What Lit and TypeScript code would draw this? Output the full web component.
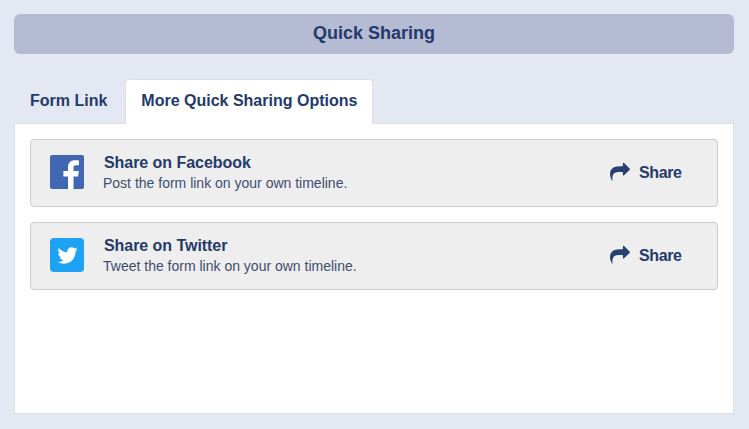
import { LitElement, html, css, svg } from 'lit'
import { customElement } from 'lit/decorators.js'

const shareIcon = svg`<path d="M1792 640q0 26-19 45l-512 512q-19 19-45 19t-45-19-19-45v-256h-224q-98 0-175.500 6t-154 21.500-133 42.500-105.500 69.500-80 101-48.500 138.500-17.500 181q0 55 5 123 0 6 2.500 23.500t2.500 26.500q0 15-8.500 25t-23.500 10q-16 0-28-17-7-9-13-22t-13.500-30-10.500-24q-127-285-127-451 0-199 53-333 162-403 875-403h224v-256q0-26 19-45t45-19 45 19l512 512q19 19 19 45z"/>`
const twitterBird = svg`<path d="M1684 408q-67 98-162 167 1 14 1 42 0 130-38 259.500t-115.500 248.500-184.500 210.500-258 146-323 54.500q-271 0-496-145 35 4 78 4 225 0 401-138-105-2-188-64.500t-114-159.500q33 5 61 5 43 0 85-11-112-23-185.500-111.500t-73.500-205.500v-4q68 38 146 41-66-44-105-115t-39-154q0-88 44-163 121 149 294.500 238.500t371.500 99.500q-8-38-8-74 0-134 94.500-228.500t228.500-94.500q140 0 236 102 109-21 205-78-37 115-142 178 92-10 184-50z"/>`
const facebookF = svg`<path d="M23.5 34V21.5h4.600l.7-5.400h-5.300v-3.300c0-1.600.4-2.600 2.600-2.600h2.900V5.400c-.5-.1-2.200-.2-4.100-.2-4.100 0-6.900 2.500-6.900 7v3.900h-4.600v5.400h4.600V34z"/>`

@customElement('app-root')
export class AppRoot extends LitElement {
  static styles = css`
    :host {
      display: block;
      height: 429px;
      padding: 14px 15px 15px 14px;
      box-sizing: border-box;
      background-color: #e4e8f2;
      font-family: 'Liberation Sans', Arial, sans-serif;
      color: #243a6a;
      overflow: hidden;
    }

    .heading {
      height: 40px;
      line-height: 39px;
      text-align: center;
      font-size: 18px;
      font-weight: bold;
      border-radius: 6px;
      background-color: #b5bbd3;
      margin-bottom: 25px;
    }

    .tabs {
      display: flex;
      gap: 2px;
      height: 45px;
      margin-bottom: -1px;
    }

    .tab {
      padding: 0 16px;
      line-height: 44px;
      font-size: 16px;
      font-weight: bold;
    }

    .tab.active {
      position: relative;
      padding: 0 15px;
      line-height: 42px;
      border: 1px solid #dddfe6;
      border-bottom: none;
      border-radius: 4px 4px 0 0;
      background-color: white;
    }

    .panel {
      height: 291px;
      padding: 15px;
      box-sizing: border-box;
      display: flex;
      flex-direction: column;
      gap: 15px;
      border: 1px solid #dddfe6;
      background-color: white;
    }

    .row {
      display: flex;
      align-items: center;
      height: 68px;
      box-sizing: border-box;
      padding-left: 19px;
      border: 1px solid #cccccc;
      border-radius: 4px;
      background-color: #eeeeee;
    }

    .logo {
      width: 34px;
      height: 34px;
      flex: none;
      display: flex;
      align-items: center;
      justify-content: center;
      margin-bottom: 2px;
      border-radius: 2px;
      fill: white;
    }

    .logo.facebook {
      background-color: #4267b2;
    }

    .logo.twitter {
      border-radius: 4px;
      background-color: #1da1f2;
    }

    .copy {
      flex: 1;
      margin-left: 19px;
    }

    .title {
      font-size: 16px;
      font-weight: bold;
      line-height: 20px;
      margin-left: 1px;
      letter-spacing: -0.05px;
    }

    .desc {
      font-size: 14px;
      line-height: 20px;
      color: #3f4d70;
    }

    .share {
      display: flex;
      align-items: center;
      gap: 9px;
      width: 107px;
      font-size: 16px;
      letter-spacing: -0.4px;
      font-weight: bold;
      fill: #27406f;
    }

    .share svg {
      margin-bottom: 2px;
    }
  `

  renderRow(kind: string, title: string, desc: string) {
    return html`
      <div class="row">
        <div class="logo ${kind}">
          ${kind === 'facebook'
            ? html`<svg width="34" height="34" viewBox="0 0 34 34">${facebookF}</svg>`
            : html`<svg width="23" height="23" viewBox="0 0 1792 1792">${twitterBird}</svg>`}
        </div>
        <div class="copy">
          <div class="title">${title}</div>
          <div class="desc">${desc}</div>
        </div>
        <div class="share">
          <svg width="20" height="20" viewBox="0 0 1792 1792">${shareIcon}</svg>
          Share
        </div>
      </div>
    `
  }

  render() {
    return html`
      <div class="heading">Quick Sharing</div>
      <div class="tabs">
        <div class="tab">Form Link</div>
        <div class="tab active">More Quick Sharing Options</div>
      </div>
      <div class="panel">
        ${this.renderRow('facebook', 'Share on Facebook', 'Post the form link on your own timeline.')}
        ${this.renderRow('twitter', 'Share on Twitter', 'Tweet the form link on your own timeline.')}
      </div>
    `
  }
}
